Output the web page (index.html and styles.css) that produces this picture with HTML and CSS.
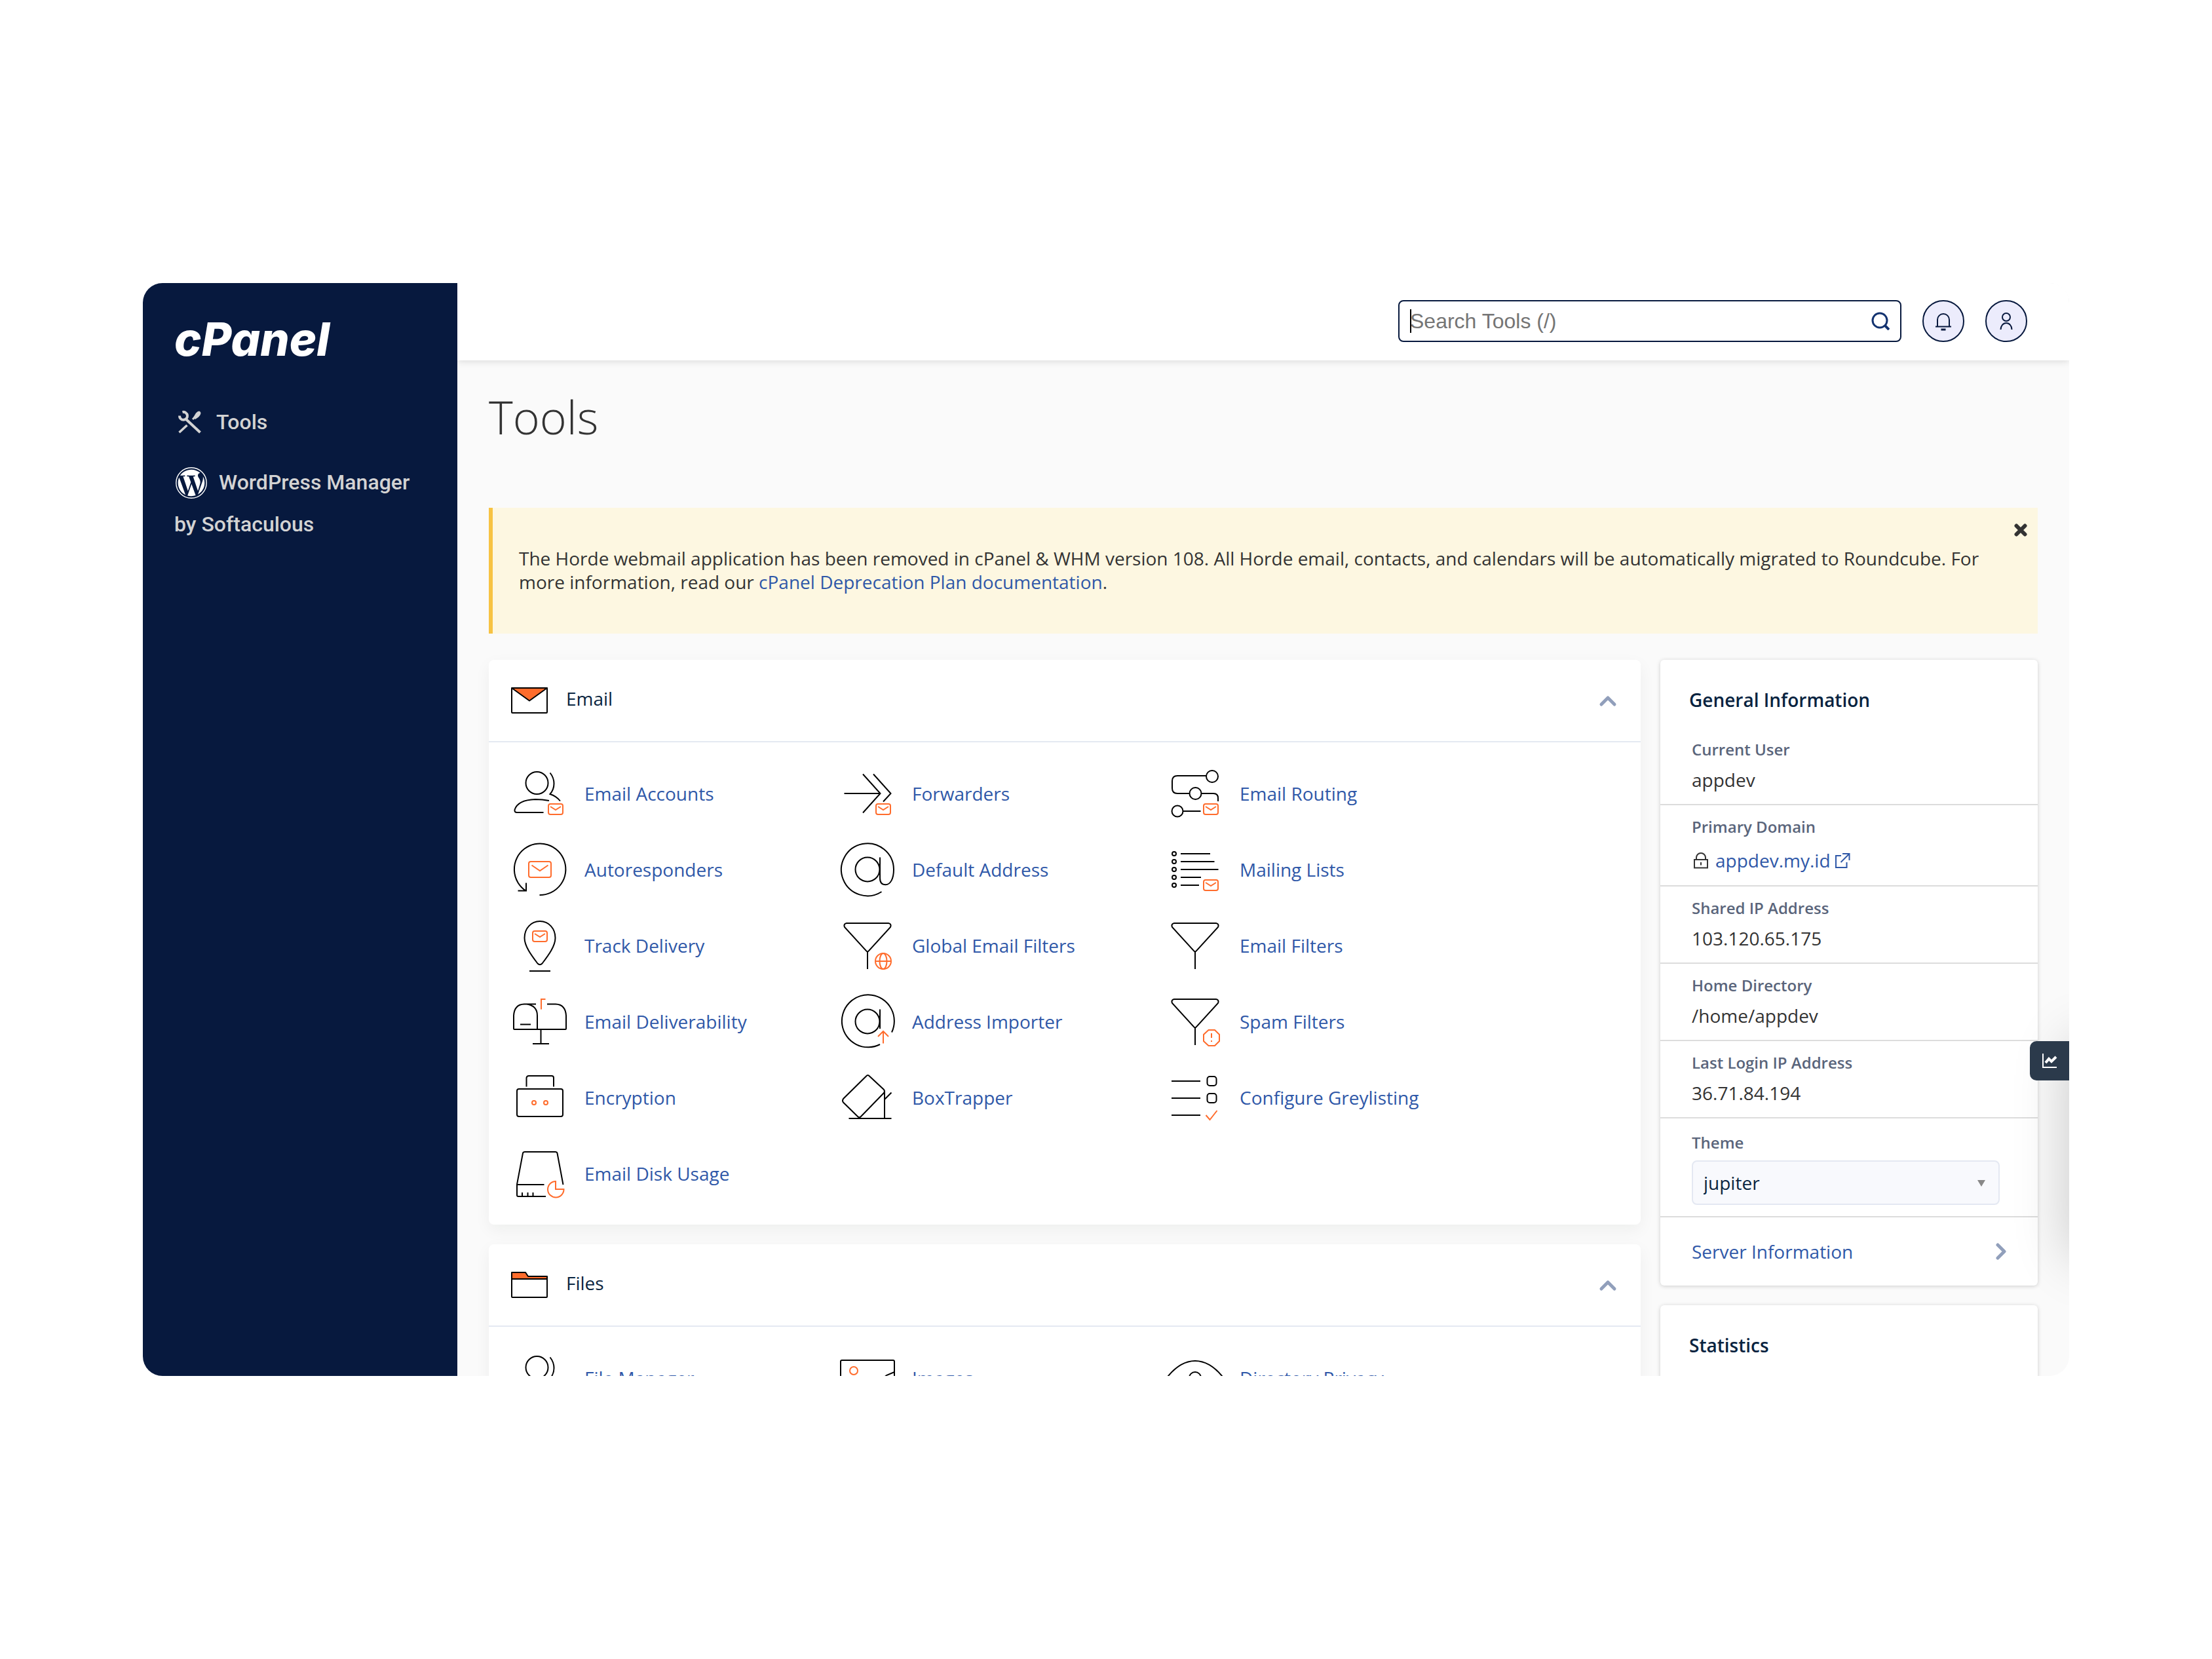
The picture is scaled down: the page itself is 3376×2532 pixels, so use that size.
FILE: index.html
```html
<!DOCTYPE html>
<html lang="en">
<head>
<meta charset="utf-8">
<meta name="viewport" content="width=device-width, initial-scale=1">
<title>cPanel - Tools</title>
<link rel="stylesheet" href="styles.css">
</head>
<body>
<svg class="sprite" aria-hidden="true">
  <symbol id="badge-mail" viewBox="0 0 24 18">
    <rect x="1" y="1" width="22" height="16" rx="3"/>
    <path d="M4 5 L12 10 L20 5"/>
  </symbol>
  <symbol id="funnel" viewBox="0 0 96 96">
    <path d="M16 14H80Q85 15 83 20L50 56Q48 59 46 56L13 20Q11 15 16 14ZM48 58V84"/>
  </symbol>
</svg>

<div class="frame">
  <aside class="sidebar">
    <a class="logo" href="#">cPanel</a>
    <nav class="nav" aria-label="Main">
      <a class="nav-link" href="#"><svg class="nav-icon nav-icon-tools" viewBox="0 0 44 36" aria-hidden="true"><g fill="none" stroke="#d3d3d3"><path d="M17 13 L39.500 34" stroke-width="4"/><path d="M7.500 34 L19.500 23" stroke-width="3.500"/><path d="M28 14 L33 9" stroke-width="3"/><path d="M12.500 3 A6 6 0 1 1 8 8.500" stroke-width="4"/></g><path fill="#d3d3d3" d="M29 11 L33 4.500 Q37.500 -0.500 40 3 Q41.500 6 37 10.500 L32 14Z"/></svg>Tools</a>
      <a class="nav-link" href="#"><svg class="nav-icon nav-icon-wp" viewBox="-1 0 26 24" aria-hidden="true"><path fill="#fff" d="M21.469 6.825c.84 1.537 1.318 3.3 1.318 5.175 0 3.979-2.156 7.456-5.363 9.325l3.295-9.527c.615-1.54.82-2.771.82-3.864 0-.405-.026-.78-.07-1.11m-7.981.105c.647-.03 1.232-.105 1.232-.105.582-.075.514-.93-.067-.899 0 0-1.755.135-2.88.135-1.064 0-2.85-.15-2.85-.15-.585-.03-.661.855-.075.885 0 0 .54.061 1.125.09l1.68 4.605-2.37 7.08L5.354 6.9c.649-.03 1.234-.1 1.234-.1.585-.075.516-.93-.065-.896 0 0-1.746.138-2.874.138-.2 0-.438-.008-.69-.015C4.911 3.15 8.235 1.215 12 1.215c2.809 0 5.365 1.072 7.286 2.833-.046-.003-.091-.009-.141-.009-1.06 0-1.812.923-1.812 1.914 0 .89.513 1.643 1.06 2.531.411.72.89 1.643.89 2.977 0 .915-.354 1.994-.821 3.479l-1.075 3.585-3.9-11.61.001.014zM12 22.784c-1.059 0-2.081-.153-3.048-.437l3.237-9.406 3.315 9.087c.024.053.05.101.078.149-1.12.393-2.325.609-3.582.609M1.211 12c0-1.564.336-3.05.935-4.39L7.29 21.709C3.694 19.96 1.212 16.271 1.211 12" transform="translate(0.700 0.700) scale(0.940)"/><circle cx="12" cy="12" r="11.600" fill="none" stroke="#fff" stroke-width="0.700"/></svg>WordPress Manager by Softaculous</a>
    </nav>
  </aside>

  <div class="content">
    <header class="topbar">
      <form class="search" role="search">
        <span class="caret"></span>
        <input class="search-input" type="text" placeholder="Search Tools (/)" aria-label="Search Tools">
        <button class="search-button" type="button" aria-label="Search"><svg width="28" height="28" viewBox="0 0 28 28" fill="none" stroke="#143370" stroke-width="3"><circle cx="13" cy="13" r="11"/><path d="M20.500 20.500L27 27" stroke-width="4"/></svg></button>
      </form>
      <button class="round" type="button" aria-label="Notifications"><svg width="32" height="32" viewBox="0 0 32 32" fill="none" stroke="#08193e" stroke-width="2"><path d="M7 24V14A9 9 0 0 1 25 14V24"/><path d="M4 24.500H28"/><path d="M12.500 29H19.500" stroke-width="3"/></svg></button>
      <button class="round" type="button" aria-label="User preferences"><svg width="32" height="32" viewBox="0 0 32 32" fill="none" stroke="#08193e" stroke-width="2"><circle cx="16" cy="10" r="6"/><path d="M7.500 29A8.500 10 0 0 1 24.500 29"/></svg></button>
    </header>

    <main class="page">
      <h1 class="title">Tools</h1>
      <div class="alert" role="alert">
        <p class="alert-text">The Horde webmail application has been removed in cPanel &amp; WHM version 108. All Horde email, contacts, and calendars will be automatically migrated to Roundcube. For more information, read our <a href="#">cPanel Deprecation Plan documentation</a>.</p>
        <button class="alert-close" type="button" aria-label="Close"><svg width="20" height="20" viewBox="0 0 20 20" stroke="#333" stroke-width="6" stroke-linecap="round"><path d="M3.500 3.500L16.500 16.500M16.500 3.500L3.500 16.500"/></svg></button>
      </div>

      <div class="columns">
        <div class="groups">
          <section class="card">
            <header class="card-head">
              <svg class="head-icon" viewBox="0 0 64 64" fill="none" stroke="#000" stroke-width="2" stroke-linejoin="round"><rect x="5" y="16" width="54" height="38" rx="1"/><path d="M5 16H59L32 35.500Z" fill="#ff6c2c"/></svg>
              <h2 class="card-title">Email</h2>
              <button class="toggle" type="button" aria-label="Collapse Email"><svg width="28" height="20" viewBox="0 0 28 20" fill="none" stroke="#919fbb" stroke-width="5" stroke-linecap="round" stroke-linejoin="round"><path d="M4 15L14 5L24 15"/></svg></button>
            </header>
            <div class="tools">
              <a class="tool" href="#"><svg class="icon" viewBox="0 0 96 96"><circle cx="43.500" cy="32" r="17"/><path d="M63.500 16.500Q69.500 24 69.500 33Q69.500 42 63.500 49Q73 52 79 59.500"/><path d="M62 59Q52 57 41 57Q14 58 9.500 73Q9 77 13 77H53.500"/><use class="accent" href="#badge-mail" x="60" y="63" width="24" height="18"/></svg>Email Accounts</a>
              <a class="tool" href="#"><svg class="icon" viewBox="0 0 96 96"><path d="M12.500 48H67M41 18.500L67.500 48L41 77.500M57 18.500L83.500 48L72 60.500"/><use class="accent" href="#badge-mail" x="60" y="63" width="24" height="18"/></svg>Forwarders</a>
              <a class="tool" href="#"><svg class="icon" viewBox="0 0 96 96"><circle cx="74" cy="22" r="9"/><path d="M65 21H21Q13 21 13 29V40Q13 48 21 48H39"/><circle cx="48.500" cy="48" r="9"/><path d="M57.500 48H76Q83 48 83 55V60"/><circle cx="21" cy="75" r="8.500"/><path d="M29.500 75H56.500"/><use class="accent" href="#badge-mail" x="60" y="63" width="24" height="18"/></svg>Email Routing</a>

              <a class="tool" href="#"><svg class="icon" viewBox="0 0 96 96"><path d="M47.500 87A39.250 39.250 0 1 0 26.500 80.500M27 68.500V80.500H14.500"/><g class="accent"><rect x="31" y="36" width="34" height="24" rx="3"/><path d="M35.500 41.500L48 50L60.500 41.500"/></g></svg>Autoresponders</a>
              <a class="tool" href="#"><svg class="icon" viewBox="0 0 96 96"><path d="M69.500 82A40 40 0 1 1 88 48C88 62 83 71.300 75.500 71.300C70 71.300 67 68 67 61V29.500"/><circle cx="48" cy="48" r="18.500"/></svg>Default Address</a>
              <a class="tool" href="#"><svg class="icon" viewBox="0 0 96 96"><circle cx="16" cy="24" r="3"/><circle cx="16" cy="36" r="3"/><circle cx="16" cy="48" r="3"/><circle cx="16" cy="60" r="3"/><circle cx="16" cy="72" r="3"/><path d="M26 24H71M26 36H77.500M26 48H83.500M26 60H57M26 72H54"/><use class="accent" href="#badge-mail" x="60" y="63" width="24" height="18"/></svg>Mailing Lists</a>

              <a class="tool" href="#"><svg class="icon" viewBox="0 0 96 96"><path d="M48 11C34.500 11 24.500 22 24.500 36.500C24.500 49 35 63 44.500 75.500Q48 79 51.500 75.500C61 63 71.500 49 71.500 36.500C71.500 22 61.500 11 48 11ZM32 87H64"/><use class="accent" href="#badge-mail" x="36" y="25" width="24" height="18"/></svg>Track Delivery</a>
              <a class="tool" href="#"><svg class="icon" viewBox="0 0 96 96"><use href="#funnel" width="96" height="96"/><g class="accent"><circle cx="72" cy="72" r="12"/><ellipse cx="72" cy="72" rx="5.500" ry="12"/><path d="M60 72H84"/></g></svg>Global Email Filters</a>
              <a class="tool" href="#"><svg class="icon" viewBox="0 0 96 96"><use href="#funnel" width="96" height="96"/></svg>Email Filters</a>

              <a class="tool" href="#"><svg class="icon" viewBox="0 0 96 96"><path d="M8 59V39Q9 22 24 21.500H42M59 21.500H72Q87 22 88 39V59Q88 60 87 60H9Q8 60 8 59M28 21.500Q44 24 44 39V60M18 52.500H34M49.500 60V82M37 82H62"/><path class="accent" d="M50 29.500V14H56.500"/></svg>Email Deliverability</a>
              <a class="tool" href="#"><svg class="icon" viewBox="0 0 96 96"><path d="M67 83A40 40 0 1 1 85 64.500M67 29.500V59"/><circle cx="48" cy="48" r="18.500"/><path class="accent" d="M72 81.500V63M64 71L72 63L80 71"/></svg>Address Importer</a>
              <a class="tool" href="#"><svg class="icon" viewBox="0 0 96 96"><use href="#funnel" width="96" height="96"/><path class="accent" d="M68.500 61H78L85 68V78L78 85H68.500L61 78V68ZM73 66V73M73 77V79"/></svg>Spam Filters</a>

              <a class="tool" href="#"><svg class="icon" viewBox="0 0 96 96"><path d="M27.500 31.500V18Q28 15 31 15H66Q69 15 69 18V31.500"/><rect x="13" y="35" width="70" height="42" rx="3"/><g class="accent"><circle cx="39" cy="56" r="3"/><circle cx="57" cy="56" r="3"/></g></svg>Encryption</a>
              <a class="tool" href="#"><svg class="icon" viewBox="0 0 96 96"><path d="M46 15.500Q48.500 12.500 51 15.500L73 36Q75 38.500 73 41L38 77Q35.500 79.500 33 77L11 55.500Q9 53 11 50ZM74 39V80M84.500 40.500L74.500 50.500M19.500 80H84.500"/></svg>BoxTrapper</a>
              <a class="tool" href="#"><svg class="icon" viewBox="0 0 96 96"><path d="M12 23H56M12 49H56M12 75H56"/><rect x="66.500" y="16" width="14" height="14" rx="4"/><rect x="66.500" y="42" width="14" height="14" rx="4"/><path class="accent" d="M64.500 75L70.500 82L81.500 68"/></svg>Configure Greylisting</a>

              <a class="tool" href="#"><svg class="icon" viewBox="0 0 96 96"><path d="M83.500 65L74.500 17Q74 15 71.500 15H25Q22.500 15 22 17L13 64.500V81Q13 83 15 83H57M13 65H54.500M21 77V83M29.500 77V83M37.500 77V83"/><path class="accent" d="M72 60V72H84.500A12.250 12.250 0 1 1 72 60Z"/></svg>Email Disk Usage</a>
            </div>
          </section>

          <section class="card">
            <header class="card-head">
              <svg class="head-icon" viewBox="0 0 64 64" fill="none" stroke="#000" stroke-width="2" stroke-linejoin="round"><path d="M5 26V16H26L30 22H59V26Z" fill="#ff6c2c"/><rect x="5" y="26" width="54" height="28" rx="1"/></svg>
              <h2 class="card-title">Files</h2>
              <button class="toggle" type="button" aria-label="Collapse Files"><svg width="28" height="20" viewBox="0 0 28 20" fill="none" stroke="#919fbb" stroke-width="5" stroke-linecap="round" stroke-linejoin="round"><path d="M4 15L14 5L24 15"/></svg></button>
            </header>
            <div class="tools">
              <a class="tool" href="#"><svg class="icon" viewBox="0 0 96 96"><circle cx="43.500" cy="32" r="17"/><path d="M63.500 16.500Q69.500 24 69.500 33Q69.500 42 63.500 49Q73 52 79 59.500"/><path d="M62 59Q52 57 41 57Q14 58 9.500 73Q9 77 13 77H53.500"/></svg>File Manager</a>
              <a class="tool" href="#"><svg class="icon" viewBox="0 0 96 96"><rect x="7" y="21" width="82" height="56" rx="2"/><path d="M36 77L77 44L89 39"/><circle class="accent" cx="27" cy="37" r="6"/></svg>Images</a>
              <a class="tool" href="#"><svg class="icon" viewBox="0 0 96 96"><path d="M3 50Q24 22 48 22Q72 22 93 50Q72 76 48 76Q24 76 3 50Z"/><circle cx="48" cy="48" r="9"/></svg>Directory Privacy</a>
            </div>
          </section>
        </div>

        <aside class="side">
          <section class="panel">
            <h2 class="panel-title">General Information</h2>
            <dl class="info">
              <div class="row"><dt class="label">Current User</dt><dd class="value">appdev</dd></div>
              <div class="row"><dt class="label">Primary Domain</dt><dd class="value value-domain"><svg width="28" height="28" viewBox="0 0 28 28" fill="none" stroke="#333" stroke-width="2"><rect x="4" y="13" width="20" height="12.500"/><path d="M7 13V10A7 7 0 0 1 21 10V13M14 17V21.500"/></svg><a href="#">appdev.my.id<svg width="28" height="28" viewBox="0 0 28 28" fill="none" stroke="#2f58a8" stroke-width="2"><path d="M12 7H4V25H20.500V17M14 4H24.500V14M24 4.500L11.500 17"/></svg></a></dd></div>
              <div class="row"><dt class="label">Shared IP Address</dt><dd class="value">103.120.65.175</dd></div>
              <div class="row"><dt class="label">Home Directory</dt><dd class="value">/home/appdev</dd></div>
              <div class="row"><dt class="label">Last Login IP Address</dt><dd class="value">36.71.84.194</dd></div>
            </dl>
            <div class="row row-theme">
              <label class="label" for="theme">Theme</label>
              <div class="select-wrap">
                <select class="select" id="theme"><option>jupiter</option></select>
                <svg class="select-arrow" width="12" height="10" viewBox="0 0 12 10" aria-hidden="true"><path d="M0 0H12L6 10Z" fill="#888"/></svg>
              </div>
            </div>
            <a class="server-link" href="#">Server Information<svg width="20" height="28" viewBox="0 0 20 28" fill="none" stroke="#919fbb" stroke-width="5" stroke-linecap="round" stroke-linejoin="round"><path d="M5 4L15 14L5 24"/></svg></a>
          </section>
          <section class="panel panel-stats">
            <h2 class="panel-title">Statistics</h2>
          </section>
        </aside>
      </div>
    </main>

    <div class="drawer">
      <button class="drawer-button" type="button" aria-label="Show analytics"><svg width="24" height="24" viewBox="0 0 24 24" fill="none" stroke="#fff"><path d="M2 1V22H23" stroke-width="2"/><path d="M6 15L11 9L15 13L22 6" stroke-width="4"/></svg></button>
    </div>
  </div>
</div>
</body>
</html>
```

FILE: styles.css
```css
* {
  box-sizing: border-box;
}

body {
  margin: 0;
  height: 100vh;
  padding: 432px 218px;
  background: #fff;
  color: #333;
  font-family: "Open Sans", "Noto Sans", sans-serif;
  font-size: 28px;
  line-height: 36px;
}

h1, h2, p, dl, dd {
  margin: 0;
}

a {
  color: #2f58a8;
  text-decoration: none;
}

button {
  padding: 0;
  border: 0;
  background: none;
  cursor: pointer;
}

svg {
  display: block;
  flex: none;
}

.sprite {
  position: absolute;
  width: 0;
  height: 0;
}

.frame {
  display: flex;
  height: 100%;
  border-radius: 30px;
  overflow: hidden;
}

/* Sidebar */
.sidebar {
  flex: none;
  width: 480px;
  padding: 46px 40px 48px 48px;
  background: #07193e;
}

.logo {
  display: block;
  color: #fff;
  font-family: Inter, sans-serif;
  font-size: 70px;
  font-style: italic;
  font-weight: 800;
  line-height: 80px;
}

.nav {
  display: flex;
  flex-direction: column;
  gap: 28px;
  padding-top: 54px;
}

.nav-link {
  color: #d3d3d3;
  font-family: Roboto, sans-serif;
  font-size: 32px;
  font-weight: 500;
  line-height: 64px;
}

.nav-icon {
  display: inline-block;
  vertical-align: middle;
}

.nav-icon-tools {
  width: 44px;
  height: 36px;
  margin: 0 20px 6px 0;
}

.nav-icon-wp {
  width: 52px;
  height: 48px;
  margin: 0 16px 4px 0;
}

/* Main area */
.content {
  position: relative;
  flex: 1;
  min-width: 0;
  display: flex;
  flex-direction: column;
  background: #fafafa;
  overflow: hidden;
}

.topbar {
  position: relative;
  flex: none;
  display: flex;
  justify-content: flex-end;
  align-items: center;
  gap: 32px;
  padding: 26px 64px 28px;
  background: #fff;
  box-shadow: 0 2px 10px rgba(0, 0, 0, 0.12);
}

.search {
  position: relative;
  display: flex;
  align-items: center;
  width: 768px;
  height: 64px;
  padding: 0 16px;
  border: 2px solid #07193e;
  border-radius: 8px;
  background: #fff;
}

.caret {
  position: absolute;
  left: 16px;
  width: 2px;
  height: 36px;
  background: #000;
}

.search-input {
  flex: 1;
  min-width: 0;
  padding: 0;
  border: 0;
  outline: 0;
  background: none;
  font-family: "Liberation Sans", sans-serif;
  font-size: 32px;
  line-height: 40px;
}

.search-input::placeholder {
  color: #757575;
}

.round {
  display: flex;
  align-items: center;
  justify-content: center;
  width: 64px;
  height: 64px;
  border: 2px solid #07193e;
  border-radius: 50%;
  background: #ececfc;
}

.page {
  padding: 38px 48px 48px;
}

.title {
  margin-bottom: 91px;
  font-size: 70px;
  font-weight: 300;
  line-height: 96px;
}

.alert {
  position: relative;
  margin-bottom: 40px;
  padding: 59px 48px 61px 40px;
  border-left: 6px solid #f7c343;
  background: #fdf7e1;
}

.alert-close {
  position: absolute;
  top: 24px;
  right: 16px;
}

.columns {
  display: grid;
  grid-template-columns: minmax(0, 1fr) 576px;
  gap: 30px;
}

.groups,
.side {
  display: flex;
  flex-direction: column;
  gap: 30px;
}

.card {
  border-radius: 8px;
  background: #fff;
  box-shadow: 0 8px 24px rgba(0, 32, 16, 0.05);
}

.card-head {
  display: flex;
  align-items: center;
  gap: 24px;
  padding: 27px 36px 33px 30px;
  border-bottom: 2px solid #e4e9f2;
}

.head-icon {
  width: 64px;
  height: 64px;
}

.card-title {
  flex: 1;
  color: #0b2540;
  font-size: 28px;
  font-weight: 400;
}

.toggle {
  padding-top: 8px;
}

.tools {
  display: grid;
  grid-template-columns: repeat(auto-fill, 500px);
  row-gap: 20px;
  padding: 30px;
}

.tool {
  display: flex;
  align-items: center;
  gap: 20px;
}

.icon {
  width: 96px;
  height: 96px;
  fill: none;
  stroke: #000;
  stroke-width: 2px;
}

.accent {
  stroke: #ff6c2c;
}

/* Side panels */
.panel {
  border-radius: 6px;
  background: #fff;
  box-shadow: 0 1px 6px rgba(0, 0, 0, 0.18);
}

.panel-stats {
  min-height: 400px;
}

.panel-title {
  padding: 44px 44px 26px;
  color: #08233f;
  font-size: 28px;
  font-weight: 600;
  line-height: 34px;
}

.row {
  display: flex;
  flex-direction: column;
  gap: 10px;
  padding: 16px 48px 18px;
  border-bottom: 2px solid #dcdcdc;
}

.label {
  color: #5a657b;
  font-size: 24px;
  font-weight: 600;
  line-height: 34px;
}

.value {
  line-height: 38px;
}

.value-domain {
  display: flex;
  align-items: center;
  gap: 8px;
  padding-top: 4px;
  line-height: 40px;
}

.value-domain a {
  display: flex;
  align-items: center;
  gap: 4px;
}

.row-theme {
  padding: 20px 58px 17px 48px;
}

.select-wrap {
  position: relative;
}

.select {
  display: block;
  width: 100%;
  height: 68px;
  padding: 0 48px 0 16px;
  border: 2px solid #e4e8f2;
  border-radius: 8px;
  appearance: none;
  background: #f8f9fd;
  color: #0b2540;
  font-family: inherit;
  font-size: 28px;
}

.select-arrow {
  position: absolute;
  top: 30px;
  right: 22px;
  pointer-events: none;
}

.server-link {
  display: flex;
  align-items: center;
  justify-content: space-between;
  padding: 34px 46px 34px 48px;
}

/* Drawer parked past the right edge, with its handle showing */
.drawer {
  position: absolute;
  top: 1157px;
  left: 100%;
  width: 400px;
  height: 330px;
  box-shadow: 0 0 80px rgba(0, 0, 0, 0.2);
}

.drawer-button {
  position: absolute;
  top: 0;
  right: 100%;
  display: flex;
  align-items: center;
  justify-content: center;
  width: 60px;
  height: 60px;
  border-radius: 10px 0 0 10px;
  background: #2b3a4b;
}
```
